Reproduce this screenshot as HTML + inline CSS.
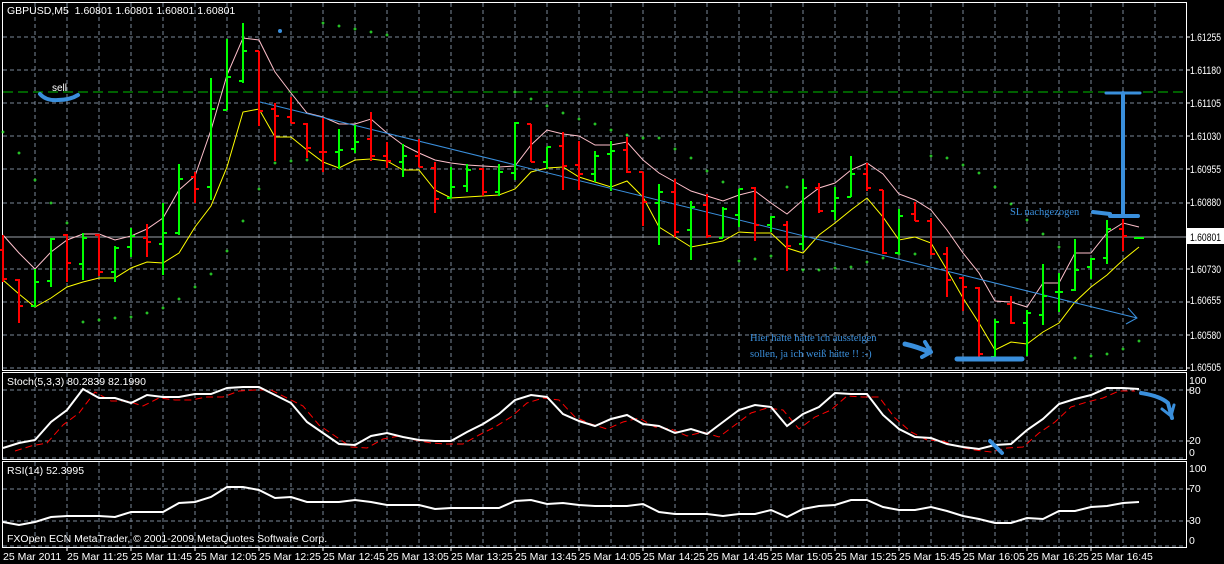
<!DOCTYPE html>
<html><head><meta charset="utf-8"><style>
html,body{margin:0;padding:0;background:#000;width:1224px;height:564px;overflow:hidden}
svg{display:block}
text{font-family:"Liberation Sans",sans-serif;font-size:10.5px;fill:#fff}
.ser{font-family:"Liberation Serif",serif;fill:#3a8fdc;font-size:10.5px}
.px{font-size:11px}
</style></head><body>
<svg width="1224" height="564" viewBox="0 0 1224 564" xmlns="http://www.w3.org/2000/svg">
<defs><path id="cr" d="M-1.5 0H1.5M0 -1.5V1.5" stroke="#33ff33" stroke-width="1"/></defs>
<rect width="1224" height="564" fill="#000"/>
<g stroke="#7a8899" stroke-width="1" stroke-dasharray="4,3" fill="none">
<path d="M35 3V370M67 3V370M99 3V370M131 3V370M163 3V370M195 3V370M227 3V370M259 3V370M291 3V370M323 3V370M355 3V370M387 3V370M419 3V370M451 3V370M483 3V370M515 3V370M547 3V370M579 3V370M611 3V370M643 3V370M675 3V370M707 3V370M739 3V370M771 3V370M803 3V370M835 3V370M867 3V370M899 3V370M931 3V370M963 3V370M995 3V370M1027 3V370M1059 3V370M1091 3V370M1123 3V370M1155 3V370"/>
<path d="M35 373V459M67 373V459M99 373V459M131 373V459M163 373V459M195 373V459M227 373V459M259 373V459M291 373V459M323 373V459M355 373V459M387 373V459M419 373V459M451 373V459M483 373V459M515 373V459M547 373V459M579 373V459M611 373V459M643 373V459M675 373V459M707 373V459M739 373V459M771 373V459M803 373V459M835 373V459M867 373V459M899 373V459M931 373V459M963 373V459M995 373V459M1027 373V459M1059 373V459M1091 373V459M1123 373V459M1155 373V459"/>
<path d="M35 462V547M67 462V547M99 462V547M131 462V547M163 462V547M195 462V547M227 462V547M259 462V547M291 462V547M323 462V547M355 462V547M387 462V547M419 462V547M451 462V547M483 462V547M515 462V547M547 462V547M579 462V547M611 462V547M643 462V547M675 462V547M707 462V547M739 462V547M771 462V547M803 462V547M835 462V547M867 462V547M899 462V547M931 462V547M963 462V547M995 462V547M1027 462V547M1059 462V547M1091 462V547M1123 462V547M1155 462V547"/>
<path d="M3 37H1186M3 70H1186M3 103H1186M3 136H1186M3 169H1186M3 203H1186M3 269H1186M3 302H1186M3 335H1186M3 368H1186"/>
<path d="M3 390H1186M3 441H1186M3 458H1186M3 489H1186M3 521H1186M3 546H1186"/>
</g>
<path d="M3 237H1186" stroke="#9aa0a8" stroke-width="1"/>
<path d="M3 92H1186" stroke="#00c000" stroke-width="1" stroke-dasharray="10,5"/>
<g stroke="#fff" stroke-width="1" fill="none">
<path d="M2.5 2.5H1186.5V370.5H2.5Z"/>
<path d="M2.5 372.5H1186.5V459.5H2.5Z"/>
<path d="M2.5 461.5H1186.5V547.5H2.5Z"/>
<path d="M1186 37h4M1186 70h4M1186 103h4M1186 136h4M1186 169h4M1186 203h4M1186 269h4M1186 302h4M1186 335h4M1186 368h4M1186 390h4M1186 441h4M1186 489h4M1186 521h4"/>
<path d="M67 547v4M131 547v4M195 547v4M259 547v4M323 547v4M387 547v4M451 547v4M515 547v4M579 547v4M643 547v4M707 547v4M771 547v4M835 547v4M899 547v4M963 547v4M1027 547v4M1091 547v4"/>
</g>
<g>
<use href="#cr" x="3" y="132"/><use href="#cr" x="19" y="153"/><use href="#cr" x="35" y="180"/><use href="#cr" x="51" y="203"/><use href="#cr" x="67" y="223"/><use href="#cr" x="83" y="322"/><use href="#cr" x="99" y="320"/><use href="#cr" x="115" y="318"/><use href="#cr" x="131" y="317"/><use href="#cr" x="147" y="313"/><use href="#cr" x="163" y="308"/><use href="#cr" x="179" y="299"/><use href="#cr" x="195" y="287"/><use href="#cr" x="211" y="274"/><use href="#cr" x="227" y="251"/><use href="#cr" x="243" y="221"/><use href="#cr" x="259" y="189"/><use href="#cr" x="275" y="163"/><use href="#cr" x="291" y="161"/><use href="#cr" x="307" y="160"/>
<use href="#cr" x="323" y="23"/><use href="#cr" x="339" y="26"/><use href="#cr" x="355" y="29"/><use href="#cr" x="371" y="32"/><use href="#cr" x="387" y="35"/>
<use href="#cr" x="515" y="92"/><use href="#cr" x="531" y="99"/><use href="#cr" x="547" y="106"/><use href="#cr" x="563" y="113"/><use href="#cr" x="579" y="119"/><use href="#cr" x="595" y="124"/><use href="#cr" x="611" y="130"/><use href="#cr" x="627" y="135"/><use href="#cr" x="643" y="138"/><use href="#cr" x="659" y="138"/><use href="#cr" x="675" y="149"/><use href="#cr" x="691" y="158"/><use href="#cr" x="707" y="171"/><use href="#cr" x="723" y="182"/><use href="#cr" x="739" y="261"/><use href="#cr" x="755" y="259"/><use href="#cr" x="771" y="256"/><use href="#cr" x="787" y="187"/><use href="#cr" x="803" y="270"/><use href="#cr" x="819" y="270"/><use href="#cr" x="835" y="268"/><use href="#cr" x="851" y="267"/><use href="#cr" x="867" y="262"/><use href="#cr" x="883" y="258"/><use href="#cr" x="899" y="254"/><use href="#cr" x="915" y="254"/><use href="#cr" x="931" y="156"/><use href="#cr" x="947" y="158"/><use href="#cr" x="963" y="165"/><use href="#cr" x="979" y="173"/><use href="#cr" x="995" y="187"/><use href="#cr" x="1011" y="204"/><use href="#cr" x="1027" y="220"/><use href="#cr" x="1043" y="234"/><use href="#cr" x="1059" y="247"/><use href="#cr" x="1075" y="358"/><use href="#cr" x="1091" y="356"/><use href="#cr" x="1107" y="354"/><use href="#cr" x="1123" y="349"/><use href="#cr" x="1139" y="341"/>
</g>
<circle cx="280" cy="31" r="2" fill="#3a8fdc"/>
<polyline fill="none" stroke="#ffc0cb" stroke-width="1" points="3,235 19,253 35,269 51,252 67,240 83,234 99,234 115,240 131,236 147,229 163,218 179,190 195,176 211,130 227,75 243,38 259,40 275,72 291,93 307,113 323,117 339,124 355,124 371,119 387,133 403,145 419,153 435,160 451,163 467,165 483,166 499,167 515,166 531,145 547,130 563,134 579,136 595,145 611,145 627,142 643,160 659,173 675,182 691,191 707,196 723,201 739,195 755,191 771,203 787,214 803,200 819,188 835,183 851,170 867,163 883,174 899,194 915,200 931,210 947,230 963,253 979,273 995,301 1011,302 1027,307 1043,283 1059,283 1075,253 1091,253 1107,233 1123,223 1139,227"/>
<polyline fill="none" stroke="#ffff00" stroke-width="1" points="3,280 19,294 35,307 51,298 67,287 83,282 99,278 115,278 131,268 147,262 163,263 179,253 195,227 211,206 227,167 243,112 259,109 275,137 291,137 307,150 323,162 339,168 355,160 371,159 387,161 403,170 419,170 435,190 451,198 467,197 483,196 499,195 515,189 531,172 547,168 563,167 579,177 595,182 611,187 627,181 643,197 659,227 675,237 691,247 707,244 723,241 739,232 755,233 771,233 787,248 803,253 819,235 835,223 851,210 867,198 883,217 899,240 915,237 931,243 947,270 963,298 979,323 995,350 1011,342 1027,344 1043,332 1059,323 1075,302 1091,287 1107,275 1123,260 1139,247"/>
<path d="M260 102L1137 318M1128 308L1137 318L1126 324" stroke="#3a8fdc" stroke-width="1" fill="none"/>
<g stroke="#ff0000" stroke-width="2" fill="none">
<path d="M3 235V282M-1 250H3M3 279H7"/>
<path d="M19 279V323M15 280H19M19 306H23"/>
<path d="M67 234V282M63 235H67M67 263H71"/>
<path d="M99 234V276M95 235H99M99 272H103"/>
<path d="M147 224V257M143 238H147M147 242H151"/>
<path d="M195 172V203M191 177H195M195 189H199"/>
<path d="M259 51V126M255 51H259M259 111H263"/>
<path d="M275 103V161M271 109H275M275 116H279"/>
<path d="M291 97V123M287 117H291M291 123H295"/>
<path d="M307 123V158M303 124H307M307 148H311"/>
<path d="M323 118V172M319 152H323M323 152H327"/>
<path d="M371 112V161M367 139H371M371 156H375"/>
<path d="M387 142V168M383 156H387M387 161H391"/>
<path d="M419 139V167M415 156H419M419 167H423"/>
<path d="M435 162V213M431 168H435M435 199H439"/>
<path d="M483 168V196M479 169H483M483 192H487"/>
<path d="M531 124V162M527 124H531M531 162H535"/>
<path d="M563 132V190M559 146H563M563 166H567"/>
<path d="M579 141V190M575 165H579M579 174H583"/>
<path d="M627 137V173M623 150H627M627 172H631"/>
<path d="M643 172V226M639 172H643M643 202H647"/>
<path d="M675 179V237M671 192H675M675 232H679"/>
<path d="M707 194V238M703 205H707M707 236H711"/>
<path d="M755 187V241M751 188H755M755 225H759"/>
<path d="M787 221V271M783 225H787M787 246H791"/>
<path d="M819 183V213M815 188H819M819 211H823"/>
<path d="M867 163V191M863 174H867M867 188H871"/>
<path d="M883 190V254M879 190H883M883 253H887"/>
<path d="M915 202V221M911 214H915M915 221H919"/>
<path d="M931 218V255M927 221H931M931 254H935"/>
<path d="M947 247V297M943 254H947M947 280H951"/>
<path d="M963 277V311M959 278H963M963 287H967"/>
<path d="M979 287V357M975 288H979M979 354H983"/>
<path d="M1011 296V324M1007 304H1011M1011 323H1015"/>
<path d="M1123 219V251M1119 229H1123M1123 236H1127"/>
</g>
<g stroke="#00ff00" stroke-width="2" fill="none">
<path d="M35 269V307M31 306H35M35 282H39"/>
<path d="M51 238V287M47 281H51M51 239H55"/>
<path d="M83 233V280M79 264H83M83 238H87"/>
<path d="M115 246V282M111 272H115M115 248H119"/>
<path d="M131 228V257M127 247H131M131 236H135"/>
<path d="M163 203V275M159 244H163M163 233H167"/>
<path d="M179 164V235M175 233H179M179 179H183"/>
<path d="M211 78V200M207 187H211M211 109H215"/>
<path d="M227 39V110M223 110H227M227 77H231"/>
<path d="M243 23V83M239 81H243M243 51H247"/>
<path d="M339 129V169M335 152H339M339 150H343"/>
<path d="M355 125V153M351 149H355M355 142H359"/>
<path d="M403 144V177M399 162H403M403 156H407"/>
<path d="M451 167V198M447 198H451M451 187H455"/>
<path d="M467 164V192M463 186H467M467 170H471"/>
<path d="M499 164V196M495 192H499M499 172H503"/>
<path d="M515 122V180M511 173H515M515 123H519"/>
<path d="M547 147V169M543 162H547M547 147H551"/>
<path d="M595 151V182M591 174H595M595 156H599"/>
<path d="M611 141V191M607 154H611M611 151H615"/>
<path d="M659 184V245M655 203H659M659 192H663"/>
<path d="M691 201V260M687 230H691M691 207H695"/>
<path d="M723 207V238M719 238H723M723 209H727"/>
<path d="M739 189V227M735 215H739M739 189H743"/>
<path d="M771 216V232M767 225H771M771 217H775"/>
<path d="M803 179V250M799 244H803M803 188H807"/>
<path d="M835 187V220M831 211H835M835 198H839"/>
<path d="M851 156V197M847 197H851M851 174H855"/>
<path d="M899 209V254M895 253H899M899 216H903"/>
<path d="M995 319V358M991 357H995M995 322H999"/>
<path d="M1027 310V356M1023 323H1027M1027 313H1031"/>
<path d="M1043 264V325M1039 315H1043M1043 296H1047"/>
<path d="M1059 273V312M1055 292H1059M1059 292H1063"/>
<path d="M1075 239V291M1071 290H1075M1075 270H1079"/>
<path d="M1091 258V279M1087 267H1091M1091 259H1095"/>
<path d="M1107 220V264M1103 258H1107M1107 229H1111"/>
<path d="M1134 238H1144"/>
</g>
<polyline fill="none" stroke="#ff0000" stroke-width="1" stroke-dasharray="7,4" transform="translate(12,3)" points="3,448 19,443 35,440 51,422 67,410 83,389 99,398 115,398 131,403 147,395 163,397 179,397 195,394 211,394 227,388 243,387 259,387 275,395 291,403 307,422 323,433 339,444 355,445 371,436 387,433 403,437 419,440 435,441 451,441 467,432 483,424 499,414 515,400 531,395 547,397 563,414 579,421 595,426 611,419 627,415 643,424 659,426 675,433 691,429 707,434 723,422 739,410 755,405 771,407 787,426 803,414 819,407 835,393 851,394 867,394 883,415 899,429 915,437 931,438 947,444 963,447 979,449 995,445 1011,444 1027,430 1043,419 1059,404 1075,399 1091,395 1107,388 1123,388"/>
<polyline fill="none" stroke="#fff" stroke-width="2" points="3,448 19,443 35,440 51,422 67,410 83,389 99,398 115,398 131,403 147,395 163,397 179,397 195,394 211,394 227,388 243,387 259,387 275,395 291,403 307,422 323,433 339,444 355,445 371,436 387,433 403,437 419,440 435,441 451,441 467,432 483,424 499,414 515,400 531,395 547,397 563,414 579,421 595,426 611,419 627,415 643,424 659,426 675,433 691,429 707,434 723,422 739,410 755,405 771,407 787,426 803,414 819,407 835,393 851,394 867,394 883,415 899,429 915,437 931,438 947,444 963,447 979,449 995,445 1011,444 1027,430 1043,419 1059,404 1075,399 1091,395 1107,388 1123,388 1139,389"/>
<polyline fill="none" stroke="#fff" stroke-width="2" points="3,522 19,525 35,522 51,517 67,516 83,516 99,516 115,517 131,512 147,512 163,512 179,503 195,502 211,497 227,487 243,487 259,490 275,498 291,497 307,502 323,502 339,502 355,500 371,502 387,505 403,505 419,505 435,509 451,508 467,508 483,508 499,508 515,501 531,500 547,504 563,503 579,505 595,506 611,506 627,506 643,504 659,512 675,514 691,514 707,514 723,516 739,514 755,514 771,510 787,517 803,509 819,506 835,505 851,500 867,500 883,507 899,510 915,510 931,507 947,511 963,516 979,519 995,523 1011,523 1027,518 1043,519 1059,511 1075,511 1091,507 1107,506 1123,503 1139,502"/>
<g stroke="#3a8fdc" fill="none" stroke-linecap="round" stroke-linejoin="round">
<path d="M40 94Q46 101 58 100Q70 100 78 95" stroke-width="4"/>
<path d="M905 344Q918 347 929 352" stroke-width="5"/>
<path d="M925 342L931 352L922 357" stroke-width="4"/>
<path d="M957 359H1022" stroke-width="5"/>
<path d="M1123 93V216" stroke-width="4"/>
<path d="M1106 93H1140" stroke-width="3"/>
<path d="M1093 212L1110 214M1110 216H1138" stroke-width="4"/>
<path d="M1141 393Q1160 396 1168 403L1172 418" stroke-width="4"/>
<path d="M1162 409L1171 416L1174 405" stroke-width="3"/>
<path d="M990 441L1002 453" stroke-width="4"/>
</g>
<text x="7" y="14">GBPUSD,M5&#160; 1.60801 1.60801 1.60801 1.60801</text>
<text x="52" y="91" style="font-size:10px">sell</text>
<text class="ser" x="1010" y="215">SL nachgezogen</text>
<text class="ser" x="750" y="341">Hier hätte hätte ich aussteigen</text>
<text class="ser" x="750" y="357">sollen, ja ich weiß hätte !! :-)</text>
<text x="7" y="385">Stoch(5,3,3) 80.2839 82.1990</text>
<text x="7" y="474">RSI(14) 52.3995</text>
<text x="7" y="542">FXOpen ECN MetaTrader, © 2001-2009 MetaQuotes Software Corp.</text>
<g>
<text class="px" x="1190" y="41" textLength="31" lengthAdjust="spacingAndGlyphs">1.61255</text><text class="px" x="1190" y="74" textLength="31" lengthAdjust="spacingAndGlyphs">1.61180</text><text class="px" x="1190" y="107" textLength="31" lengthAdjust="spacingAndGlyphs">1.61105</text><text class="px" x="1190" y="140" textLength="31" lengthAdjust="spacingAndGlyphs">1.61030</text><text class="px" x="1190" y="173" textLength="31" lengthAdjust="spacingAndGlyphs">1.60955</text><text class="px" x="1190" y="206" textLength="31" lengthAdjust="spacingAndGlyphs">1.60880</text><text class="px" x="1190" y="273" textLength="31" lengthAdjust="spacingAndGlyphs">1.60730</text><text class="px" x="1190" y="304" textLength="31" lengthAdjust="spacingAndGlyphs">1.60655</text><text class="px" x="1190" y="339" textLength="31" lengthAdjust="spacingAndGlyphs">1.60580</text><text class="px" x="1190" y="371" textLength="31" lengthAdjust="spacingAndGlyphs">1.60505</text>
<rect x="1187" y="228" width="37" height="16" fill="#fff"/>
<text class="px" x="1190" y="241" textLength="31" lengthAdjust="spacingAndGlyphs" style="fill:#000">1.60801</text>
<text x="1189" y="384">100</text><text x="1189" y="394">80</text><text x="1189" y="444">20</text><text x="1189" y="456">0</text>
<text x="1189" y="472">100</text><text x="1189" y="492">70</text><text x="1189" y="524">30</text><text x="1189" y="544">0</text>
</g>
<g>
<text x="3" y="560">25 Mar 2011</text><text x="67" y="560">25 Mar 11:25</text><text x="131" y="560">25 Mar 11:45</text><text x="195" y="560">25 Mar 12:05</text><text x="259" y="560">25 Mar 12:25</text><text x="323" y="560">25 Mar 12:45</text><text x="387" y="560">25 Mar 13:05</text><text x="451" y="560">25 Mar 13:25</text><text x="515" y="560">25 Mar 13:45</text><text x="579" y="560">25 Mar 14:05</text><text x="643" y="560">25 Mar 14:25</text><text x="707" y="560">25 Mar 14:45</text><text x="771" y="560">25 Mar 15:05</text><text x="835" y="560">25 Mar 15:25</text><text x="899" y="560">25 Mar 15:45</text><text x="963" y="560">25 Mar 16:05</text><text x="1027" y="560">25 Mar 16:25</text><text x="1091" y="560">25 Mar 16:45</text>
</g>
</svg>
</body></html>
